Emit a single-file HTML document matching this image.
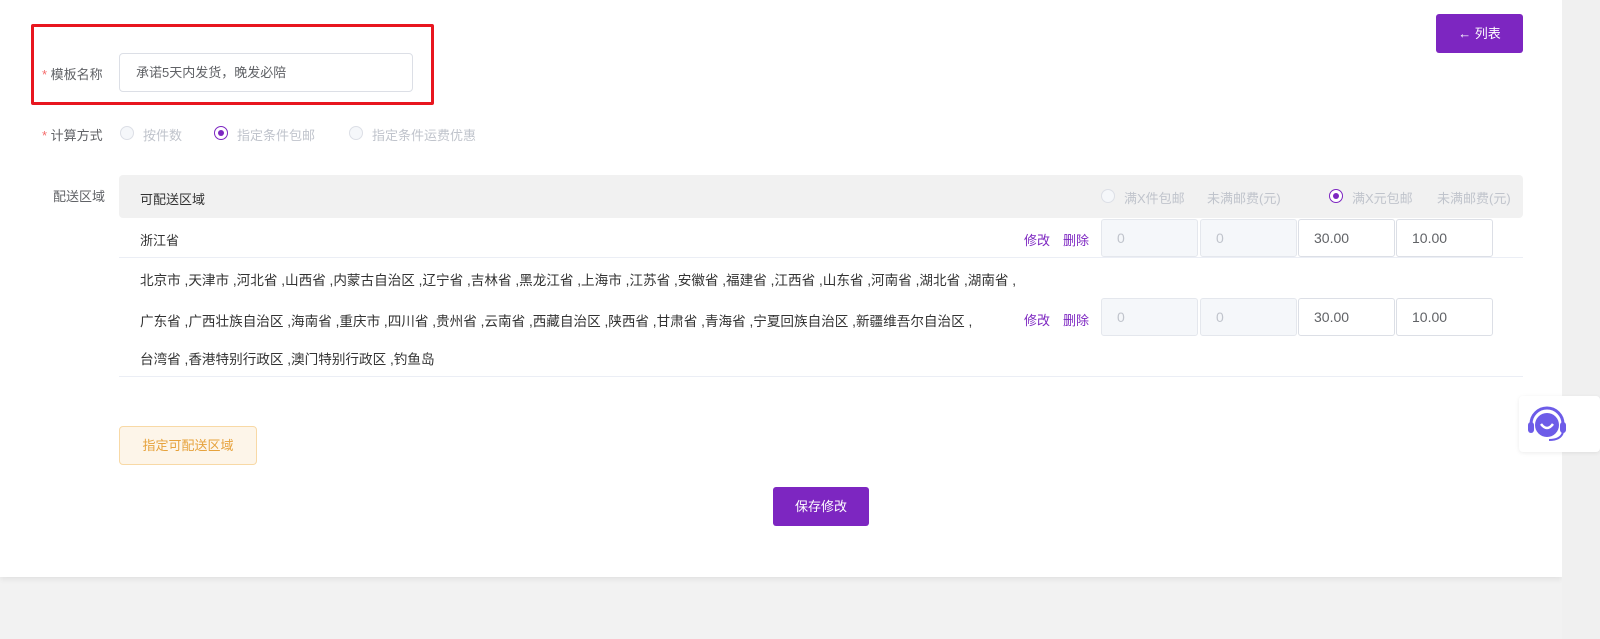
<!DOCTYPE html>
<html><head><meta charset="utf-8"><style>
*{box-sizing:border-box;margin:0;padding:0}
body{width:1600px;height:639px;background:#f2f2f2;font-family:"Liberation Sans","Noto Sans CJK SC",sans-serif;font-size:13px;color:#333;position:relative;overflow:hidden}
.card{position:absolute;left:0;top:0;width:1562px;height:577px;background:#fff;box-shadow:0 2px 6px rgba(0,0,0,.08)}
.a{position:absolute;white-space:nowrap}
.lbl{color:#606266;font-size:13px}
.star{color:#f56c6c}
.inp{position:absolute;height:38px;width:97px;border:1px solid #dcdfe6;border-radius:3px;padding-left:15px;line-height:36px;font-size:14px;color:#606266;background:#fff}
.inp.d{background:#f5f7fa;color:#c0c4cc;border-color:#e4e7ed}
.radio{position:absolute;width:14px;height:14px;border-radius:50%;border:1px solid #dcdfe6;background:#f5f7fa}
.radio.on{border-color:#7d26c1;background:#fff}
.radio.on:after{content:"";position:absolute;left:3px;top:3px;width:6px;height:6px;border-radius:50%;background:#7d26c1}
.gray{color:#c0c4cc}
.pur{color:#7d26c1}
.rg{font-size:13.6px}
</style></head><body>
<div class="card">
<div class="a" style="left:31px;top:24px;width:403px;height:81px;border:3px solid #e8161f;border-radius:2px"></div>
<div class="a lbl" style="left:42px;top:64px"><span class="star">*</span> 模板名称</div>
<div class="a" style="left:119px;top:53px;width:294px;height:39px;border:1px solid #dcdfe6;border-radius:4px;padding-left:16px;line-height:37px;color:#606266">承诺5天内发货，晚发必陪</div>
<div class="a lbl" style="left:42px;top:125px"><span class="star">*</span> 计算方式</div>
<div class="radio" style="left:120px;top:126px"></div><div class="a gray" style="left:143px;top:125px">按件数</div>
<div class="radio on" style="left:214px;top:126px"></div><div class="a gray" style="left:237px;top:125px">指定条件包邮</div>
<div class="radio" style="left:349px;top:126px"></div><div class="a gray" style="left:372px;top:125px">指定条件运费优惠</div>
<div class="a lbl" style="left:53px;top:186px">配送区域</div>
<div class="a" style="left:119px;top:175px;width:1404px;height:43px;background:#f1f1f1;border-radius:4px"></div>
<div class="a" style="left:140px;top:189px">可配送区域</div>
<div class="radio" style="left:1101px;top:189px"></div><div class="a gray" style="left:1124px;top:188px">满X件包邮</div>
<div class="a gray" style="left:1207px;top:188px">未满邮费(元)</div>
<div class="radio on" style="left:1329px;top:189px"></div><div class="a gray" style="left:1352px;top:188px">满X元包邮</div>
<div class="a gray" style="left:1437px;top:188px">未满邮费(元)</div>
<div class="a" style="left:140px;top:230px">浙江省</div>
<div class="a pur" style="left:1024px;top:230px">修改</div><div class="a pur" style="left:1063px;top:230px">删除</div>
<div class="inp d" style="left:1101px;top:219px">0</div><div class="inp d" style="left:1200px;top:219px">0</div>
<div class="inp" style="left:1298px;top:219px">30.00</div><div class="inp" style="left:1396px;top:219px">10.00</div>
<div class="a" style="left:119px;top:257px;width:1404px;height:1px;background:#ebeef5"></div>
<div class="a rg" style="left:140px;top:269px">北京市 ,天津市 ,河北省 ,山西省 ,内蒙古自治区 ,辽宁省 ,吉林省 ,黑龙江省 ,上海市 ,江苏省 ,安徽省 ,福建省 ,江西省 ,山东省 ,河南省 ,湖北省 ,湖南省 ,</div>
<div class="a rg" style="left:140px;top:310px">广东省 ,广西壮族自治区 ,海南省 ,重庆市 ,四川省 ,贵州省 ,云南省 ,西藏自治区 ,陕西省 ,甘肃省 ,青海省 ,宁夏回族自治区 ,新疆维吾尔自治区 ,</div>
<div class="a rg" style="left:140px;top:348px">台湾省 ,香港特别行政区 ,澳门特别行政区 ,钓鱼岛</div>
<div class="a pur" style="left:1024px;top:310px">修改</div><div class="a pur" style="left:1063px;top:310px">删除</div>
<div class="inp d" style="left:1101px;top:298px">0</div><div class="inp d" style="left:1200px;top:298px">0</div>
<div class="inp" style="left:1298px;top:298px">30.00</div><div class="inp" style="left:1396px;top:298px">10.00</div>
<div class="a" style="left:119px;top:376px;width:1404px;height:1px;background:#ebeef5"></div>
<div class="a" style="left:119px;top:426px;width:138px;height:39px;border:1px solid #f8d9a6;background:#fdf5e9;border-radius:4px;color:#e6a23c;line-height:37px;text-align:center">指定可配送区域</div>
<div class="a" style="left:773px;top:487px;width:96px;height:39px;background:#7d26c1;border-radius:3px;color:#fff;line-height:39px;text-align:center">保存修改</div>
<div class="a" style="left:1436px;top:14px;width:87px;height:39px;background:#7d26c1;border-radius:3px;color:#fff;line-height:39px;text-align:center">← 列表</div>
</div>
<div class="a" style="left:1562px;top:0;width:38px;height:639px;background:#f0f0f0"></div>
<div class="a" style="left:1519px;top:396px;width:81px;height:56px;background:#fff;border-radius:4px;box-shadow:0 1px 4px rgba(0,0,0,.08)">
<svg width="44" height="48" viewBox="0 0 44 48" style="position:absolute;left:6px;top:6px">
<path d="M6 22 A16 16 0 0 1 38 22" fill="none" stroke="#6d5ce8" stroke-width="3"/>
<circle cx="22" cy="23" r="12" fill="#6d5ce8"/>
<path d="M16 22 Q22 30 28 22" fill="none" stroke="#fff" stroke-width="2.5"/>
<rect x="3" y="20" width="6" height="11" rx="3" fill="#6d5ce8"/><rect x="35" y="20" width="6" height="11" rx="3" fill="#6d5ce8"/>
<path d="M38 30 Q36 38 24 38" fill="none" stroke="#6d5ce8" stroke-width="2"/>
</svg></div>
</body></html>
